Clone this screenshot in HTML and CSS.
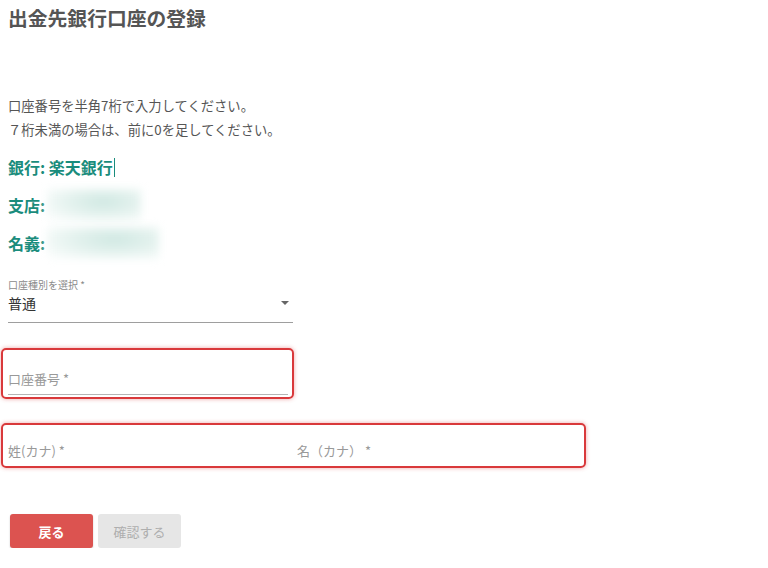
FILE: index.html
```html
<!DOCTYPE html>
<html lang="ja">
<head>
<meta charset="utf-8">
<title>出金先銀行口座の登録</title>
<link rel="stylesheet" href="styles.css">
</head>
<body>
<div class="page">
  <h1 class="title">出金先銀行口座の登録</h1>
  <div class="notes">
    <p class="note">口座番号を半角7桁で入力してください。</p>
    <p class="note">７桁未満の場合は、前に0を足してください。</p>
  </div>
  <div class="bank">
    <div class="bank-row">銀行: 楽天銀行<span class="caret"></span></div>
    <div class="bank-row">支店: <span class="blur blur-a"></span></div>
    <div class="bank-row">名義: <span class="blur blur-b"></span></div>
  </div>
  <div class="select-field">
    <div class="select-label">口座種別を選択 *</div>
    <div class="select-value"><span>普通</span><span class="arrow"></span></div>
  </div>
  <div class="highlight hl-one">
    <div class="text-field">口座番号 *</div>
  </div>
  <div class="highlight hl-two">
    <div class="name-grid">
      <div class="name-field">姓(カナ) *</div>
      <div class="name-field">名（カナ） *</div>
    </div>
  </div>
  <div class="actions">
    <button class="btn btn-back">戻る</button>
    <button class="btn btn-confirm">確認する</button>
  </div>
</div>
</body>
</html>
```
FILE: styles.css
```css
html, body {
  margin: 0;
  padding: 0;
  background: #ffffff;
}
body {
  font-family: "Noto Sans CJK JP", "Noto Sans", "Liberation Sans", sans-serif;
  color: #555555;
}
.page {
  padding: 5px 8px 0 8px;
}
.title {
  margin: 0;
  font-size: 19.8px;
  line-height: 26px;
  font-weight: 700;
  color: #555555;
}
.notes {
  margin-top: 63px;
}
.note {
  margin: 0;
  font-size: 13.3px;
  line-height: 24px;
  color: #555555;
}
.bank {
  margin-top: 6px;
}
.bank-row {
  height: 38px;
  line-height: 38px;
  font-size: 16px;
  font-weight: 700;
  color: #1a8c7c;
  display: flex;
  align-items: center;
}
.caret {
  display: inline-block;
  width: 1px;
  height: 19px;
  background: #1a8c7c;
  margin-left: 1px;
}
.blur {
  display: inline-block;
  height: 32px;
  margin-left: 2px;
  background: radial-gradient(ellipse at 60% 40%, #cfe8e2 0%, #e2f1ed 40%, #f2f9f7 72%, #ffffff 100%);
  filter: blur(4px);
}
.blur-a {
  width: 94px;
}
.blur-b {
  width: 112px;
}
.select-field {
  margin-top: 17px;
  width: 285px;
}
.select-label {
  font-size: 10px;
  line-height: 12px;
  color: #8a8a8a;
}
.select-value {
  margin-top: 2px;
  height: 30px;
  border-bottom: 1px solid #9e9e9e;
  display: flex;
  align-items: center;
  justify-content: space-between;
  font-size: 14px;
  color: #333333;
  box-sizing: border-box;
  padding-bottom: 10px;
}
.arrow {
  width: 0;
  height: 0;
  border-left: 4px solid transparent;
  border-right: 4px solid transparent;
  border-top: 4px solid #666666;
  margin-right: 4px;
}
.highlight {
  border: 2px solid #d9393b;
  border-radius: 5px;
  box-shadow: 0 0 4px rgba(217, 57, 59, 0.45);
  margin-left: -7px;
  box-sizing: border-box;
}
.hl-one {
  margin-top: 25px;
  width: 293px;
  height: 51px;
  padding: 19px 4px 0 5px;
}
.text-field {
  font-size: 13px;
  line-height: 20px;
  color: #999999;
  padding-bottom: 5px;
  border-bottom: 1px solid #b5b5b5;
}
.hl-two {
  margin-top: 24px;
  width: 585px;
  height: 45px;
  padding: 16px 4px 0 5px;
}
.name-grid {
  display: grid;
  grid-template-columns: 289px 1fr;
}
.name-field {
  font-size: 13px;
  line-height: 20px;
  color: #999999;
}
.actions {
  margin-top: 46px;
  margin-left: 2px;
  display: flex;
  gap: 5px;
}
.btn {
  width: 83px;
  height: 34px;
  border: none;
  border-radius: 3px;
  font-family: "Noto Sans CJK JP", "Noto Sans", sans-serif;
  font-size: 13px;
  padding: 0;
}
.btn-back {
  background: #dc5350;
  color: #ffffff;
  font-weight: 700;
  box-shadow: 0 1px 2px rgba(0, 0, 0, 0.2);
}
.btn-confirm {
  background: #e6e6e6;
  color: #aeaeae;
}
```
